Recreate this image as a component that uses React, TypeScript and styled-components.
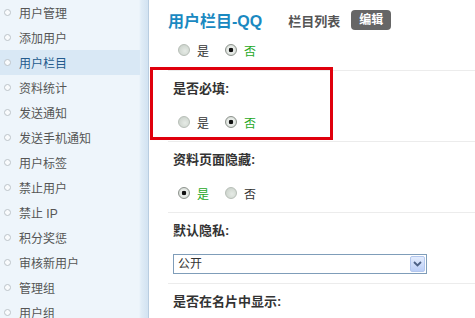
import React from "react";
import styled, { createGlobalStyle } from "styled-components";

const menuItems = [
  "用户管理",
  "添加用户",
  "用户栏目",
  "资料统计",
  "发送通知",
  "发送手机通知",
  "用户标签",
  "禁止用户",
  "禁止 IP",
  "积分奖惩",
  "审核新用户",
  "管理组",
  "用户组",
];
const activeMenu = "用户栏目";

type Choice = { yes: boolean };

const RadioPair = ({ yes }: Choice) => (
  <ControlRow>
    <Option>
      <Radio type="radio" checked={yes} readOnly />
      <OptionText $on={yes}>是</OptionText>
    </Option>
    <Option>
      <Radio type="radio" checked={!yes} readOnly />
      <OptionText $on={!yes}>否</OptionText>
    </Option>
  </ControlRow>
);

const App = () => {
  return (
    <>
      <GlobalStyle />
      <Page>
        <Sidebar>
          <MenuList>
            {menuItems.map((i) => (
              <MenuItem key={i} $active={i === activeMenu}>
                <Bullet />
                {i}
              </MenuItem>
            ))}
          </MenuList>
        </Sidebar>
        <Main>
          <Header>
            <Title>用户栏目-QQ</Title>
            <ListLink>栏目列表</ListLink>
            <Badge>编辑</Badge>
          </Header>
          <Section $tail>
            <RadioPair yes={false} />
          </Section>
          <Section>
            <FieldLabel>是否必填:</FieldLabel>
            <RadioPair yes={false} />
          </Section>
          <Section>
            <FieldLabel>资料页面隐藏:</FieldLabel>
            <RadioPair yes={true} />
          </Section>
          <Section>
            <FieldLabel>默认隐私:</FieldLabel>
            <ControlRow>
              <SelectBox>
                <SelectValue>公开</SelectValue>
                <SelectArrow>
                  <svg width="9" height="6" viewBox="0 0 9 6">
                    <path d="M1 1l3.5 3.5L8 1" fill="none" stroke="#4d6185" strokeWidth="1.8" />
                  </svg>
                </SelectArrow>
              </SelectBox>
            </ControlRow>
          </Section>
          <Section>
            <FieldLabel>是否在名片中显示:</FieldLabel>
          </Section>
          <Highlight />
        </Main>
      </Page>
    </>
  );
};

const GlobalStyle = createGlobalStyle`
  html, body {
    margin: 0;
    padding: 0;
    background: #fff;
  }
  body {
    font-family: "Liberation Sans", "Noto Sans CJK SC", sans-serif;
    font-size: 12px;
    color: #555;
  }
`;

const Page = styled.div`
  display: flex;
  height: 318px;
  overflow: hidden;
`;

const Sidebar = styled.div`
  width: 148px;
  flex-shrink: 0;
  background: linear-gradient(
    to right,
    #eef5fb 0,
    #eef5fb 139px,
    #e1edf7 141px,
    #d4e4f2 147px
  );
  border-right: 1px solid #b9cde0;
`;

const MenuList = styled.ul`
  margin: 0;
  padding: 0;
  list-style: none;
`;

const MenuItem = styled.li<{ $active?: boolean }>`
  display: flex;
  align-items: center;
  gap: 8px;
  width: 140px;
  height: 25px;
  padding-left: 4px;
  box-sizing: border-box;
  white-space: pre;
  background: ${(p) => (p.$active ? "#d9e8f5" : "transparent")};
  color: ${(p) => (p.$active ? "#245b8d" : "#555")};
`;

const Bullet = styled.span`
  width: 5px;
  height: 5px;
  border-radius: 50%;
  border: 1px solid #bcc3c9;
  background: #f9fbfd;
`;

const Main = styled.div`
  flex: 1;
  position: relative;
`;

const Header = styled.div`
  display: flex;
  align-items: center;
  height: 40px;
  padding-left: 19px;
`;

const Title = styled.span`
  font-size: 16px;
  font-weight: bold;
  color: #1a89c1;
  margin-right: 26px;
`;

const ListLink = styled.span`
  font-size: 13px;
  font-weight: bold;
  color: #555;
  margin-right: 11px;
`;

const Badge = styled.span`
  height: 20px;
  line-height: 20px;
  padding: 0 8px;
  border-radius: 4px;
  background: #666;
  color: #fff;
  font-weight: bold;
`;

const Section = styled.div<{ $tail?: boolean }>`
  display: flex;
  flex-direction: column;
  gap: 16px;
  margin-left: 19px;
  padding: ${(p) => (p.$tail ? "0 0 10px 5px" : "11px 0 9px 5px")};
  border-bottom: 1px solid #ececec;
`;

const FieldLabel = styled.div`
  font-size: 13px;
  line-height: 14px;
  font-weight: bold;
  color: #333;
`;

const ControlRow = styled.div`
  display: flex;
  align-items: center;
  gap: 11px;
  height: 20px;
`;

const Option = styled.label`
  display: flex;
  align-items: center;
  gap: 7px;
`;

const Radio = styled.input`
  appearance: none;
  width: 12px;
  height: 12px;
  margin: 0 0 0 5px;
  border-radius: 50%;
  border: 1px solid #b7beb7;
  box-sizing: border-box;
  background: radial-gradient(circle at 60% 60%, #e6ebe6 0, #cfd6cf 70%, #bcc4bc 100%);

  &:checked {
    border-color: #8d938d;
    background: radial-gradient(circle, #111 0, #111 2px, #eef1ee 2.6px, #d2d8d2 80%);
  }
`;

const OptionText = styled.span<{ $on?: boolean }>`
  color: ${(p) => (p.$on ? "#1ea81e" : "#333")};
`;

const SelectBox = styled.div`
  display: flex;
  width: 254px;
  height: 20px;
  box-sizing: border-box;
  border: 1px solid #7f9db9;
  background: #fff;
`;

const SelectValue = styled.span`
  flex: 1;
  padding-left: 4px;
  line-height: 18px;
  color: #333;
`;

const SelectArrow = styled.span`
  display: flex;
  align-items: center;
  justify-content: center;
  width: 15px;
  margin: 1px;
  border: 1px solid #b3c7ee;
  border-radius: 2px;
  box-sizing: border-box;
  background: linear-gradient(#e3ecfd, #bccff7);
`;

const Highlight = styled.div`
  position: absolute;
  left: 1px;
  top: 67px;
  width: 183px;
  height: 73px;
  box-sizing: border-box;
  border: 3px solid #e0000d;
  pointer-events: none;
`;

export default App;
